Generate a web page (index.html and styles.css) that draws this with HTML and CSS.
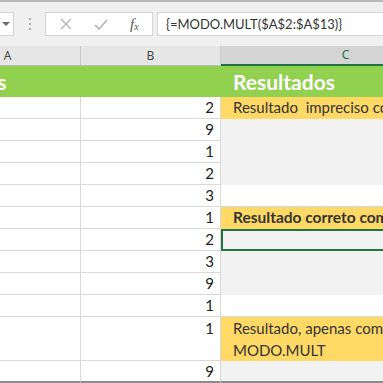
FILE: index.html
```html
<!DOCTYPE html>
<html lang="pt">
<head>
    <meta charset="UTF-8">
    <title>MODO.MULT</title>
    <link rel="stylesheet" href="styles.css">
</head>
<body>
    <div class="app">
        <div class="topline"></div>
        <div class="formula-bar">
            <div class="name-box">
                <svg width="8" height="5" viewBox="0 0 8 5"><path d="M0 0 L8 0 L4 4 Z" fill="#6a6a6a"/></svg>
            </div>
            <div class="grip"><span></span><span></span><span></span></div>
            <div class="fx-box">
                <svg class="ico-x" width="12" height="12" viewBox="0 0 12 12"><path d="M1 1 L11 11 M11 1 L1 11" stroke="#b4b4b4" stroke-width="1.4" fill="none"/></svg>
                <svg class="ico-ok" width="14" height="11" viewBox="0 0 14 11"><path d="M1 6 L5 10 L13 1" stroke="#b4b4b4" stroke-width="1.6" fill="none"/></svg>
                <span class="fx">f<sub>x</sub></span>
            </div>
            <div class="formula-input">{=MODO.MULT($A$2:$A$13)}</div>
        </div>

        <div class="sheet">
            <div class="row heads">
                <div class="ch">A</div>
                <div class="ch">B</div>
                <div class="ch sel">C</div>
            </div>
            <div class="row title">
                <div class="c green">Dados</div>
                <div class="c green"></div>
                <div class="c green">Resultados</div>
            </div>
            <div class="row">
                <div class="c"></div><div class="c num">2</div>
                <div class="c yellow">Resultado&nbsp; impreciso com MODO</div>
            </div>
            <div class="row">
                <div class="c"></div><div class="c num">9</div><div class="c gray"></div>
            </div>
            <div class="row">
                <div class="c"></div><div class="c num">1</div><div class="c gray"></div>
            </div>
            <div class="row">
                <div class="c"></div><div class="c num">2</div><div class="c gray"></div>
            </div>
            <div class="row">
                <div class="c"></div><div class="c num">3</div><div class="c"></div>
            </div>
            <div class="row">
                <div class="c"></div><div class="c num">1</div>
                <div class="c yellow bold">Resultado correto com MODO.MULT</div>
            </div>
            <div class="row">
                <div class="c"></div><div class="c num">2</div><div class="c gray active"></div>
            </div>
            <div class="row">
                <div class="c"></div><div class="c num">3</div><div class="c gray"></div>
            </div>
            <div class="row">
                <div class="c"></div><div class="c num">9</div><div class="c gray"></div>
            </div>
            <div class="row">
                <div class="c"></div><div class="c num">1</div><div class="c"></div>
            </div>
            <div class="row tall">
                <div class="c"></div><div class="c num">1</div>
                <div class="c yellow wrap">Resultado, apenas com<br>MODO.MULT</div>
            </div>
            <div class="row last">
                <div class="c"></div><div class="c num">9</div><div class="c gray"></div>
            </div>
        </div>
    </div>
</body>
</html>
```

FILE: styles.css
```css
html, body {
    margin: 0;
    padding: 0;
}
body {
    width: 383px;
    height: 383px;
    overflow: hidden;
    background: #fff;
    font-family: Lato, "Liberation Sans", sans-serif;
}
.app {
    width: 383px;
    height: 383px;
    overflow: hidden;
}
.topline {
    height: 2px;
    background: #b9b9b9;
}
.formula-bar {
    height: 44px;
    background: #f0f0f0;
    display: flex;
    align-items: flex-start;
    padding-top: 10px;
    box-sizing: border-box;
}
.name-box {
    width: 14px;
    height: 24px;
    background: #fff;
    border: 1px solid #d4d4d4;
    border-left: none;
    box-sizing: border-box;
    display: flex;
    align-items: center;
    justify-content: center;
    padding-right: 2px;
}
.grip {
    width: 31px;
    height: 24px;
    display: flex;
    flex-direction: column;
    align-items: center;
    justify-content: center;
    gap: 3px;
}
.grip span {
    width: 2px;
    height: 2px;
    background: #a8a8a8;
}
.fx-box {
    width: 108px;
    height: 24px;
    background: #fff;
    border: 1px solid #d4d4d4;
    box-sizing: border-box;
    display: flex;
    align-items: center;
    padding-left: 14px;
}
.ico-x {
    margin-right: 22px;
}
.ico-ok {
    margin-right: 22px;
}
.fx {
    font-family: "Liberation Serif", serif;
    font-style: italic;
    font-size: 15px;
    color: #555;
    line-height: 1;
}
.fx sub {
    font-size: 10px;
    vertical-align: -1px;
}
.formula-input {
    flex: 1;
    margin-left: 4px;
    height: 24px;
    background: #fff;
    border: 1px solid #d4d4d4;
    border-right: none;
    box-sizing: border-box;
    padding-left: 8px;
    font-size: 13px;
    line-height: 22px;
    color: #333;
    white-space: nowrap;
}

/* grid */
.sheet {
    margin-left: -65px;
    width: 600px;
}
.row {
    display: grid;
    grid-template-columns: 146px 140px 250px;
    height: 22px;
}
.row.tall {
    height: 44px;
}
.row.heads {
    height: 20px;
    background: #e6e6e6;
}
.row.title {
    height: 31px;
}
.ch {
    font-family: "Noto Sans", sans-serif;
    font-size: 12px;
    line-height: 19px;
    color: #444;
    text-align: center;
    border-right: 1px solid #c8c8c8;
    border-bottom: 1px solid #bcbcbc;
}
.ch.sel {
    background: #d4d4d4;
    color: #217346;
    border-bottom: 2px solid #217346;
    line-height: 18px;
}
.c {
    border-right: 1px solid #d9d9d9;
    border-bottom: 1px solid #d9d9d9;
    font-size: 15px;
    line-height: 21px;
    color: #222;
    white-space: nowrap;
    overflow: hidden;
    padding-left: 12px;
    box-sizing: border-box;
}
.c.num {
    text-align: right;
    padding-right: 6px;
    padding-left: 0;
}
.c.green {
    background: #92d050;
    border-color: #92d050;
    color: #fff;
    font-weight: bold;
    font-size: 21px;
    line-height: 31px;
}
.c.yellow {
    background: #ffd966;
    border-color: #ffd966;
    color: #333;
}
.c.gray {
    background: #f2f2f2;
    border-bottom-color: #f2f2f2;
}
.c.bold {
    font-weight: bold;
    font-size: 15.5px;
}
.c.wrap {
    line-height: 22px;
    white-space: normal;
}
.tall .c.num {
    line-height: 22px;
}
.c.active {
    border: 2px solid #217346;
}
.row.last .c {
    border-bottom: 2px solid #8c8c8c;
}
```
